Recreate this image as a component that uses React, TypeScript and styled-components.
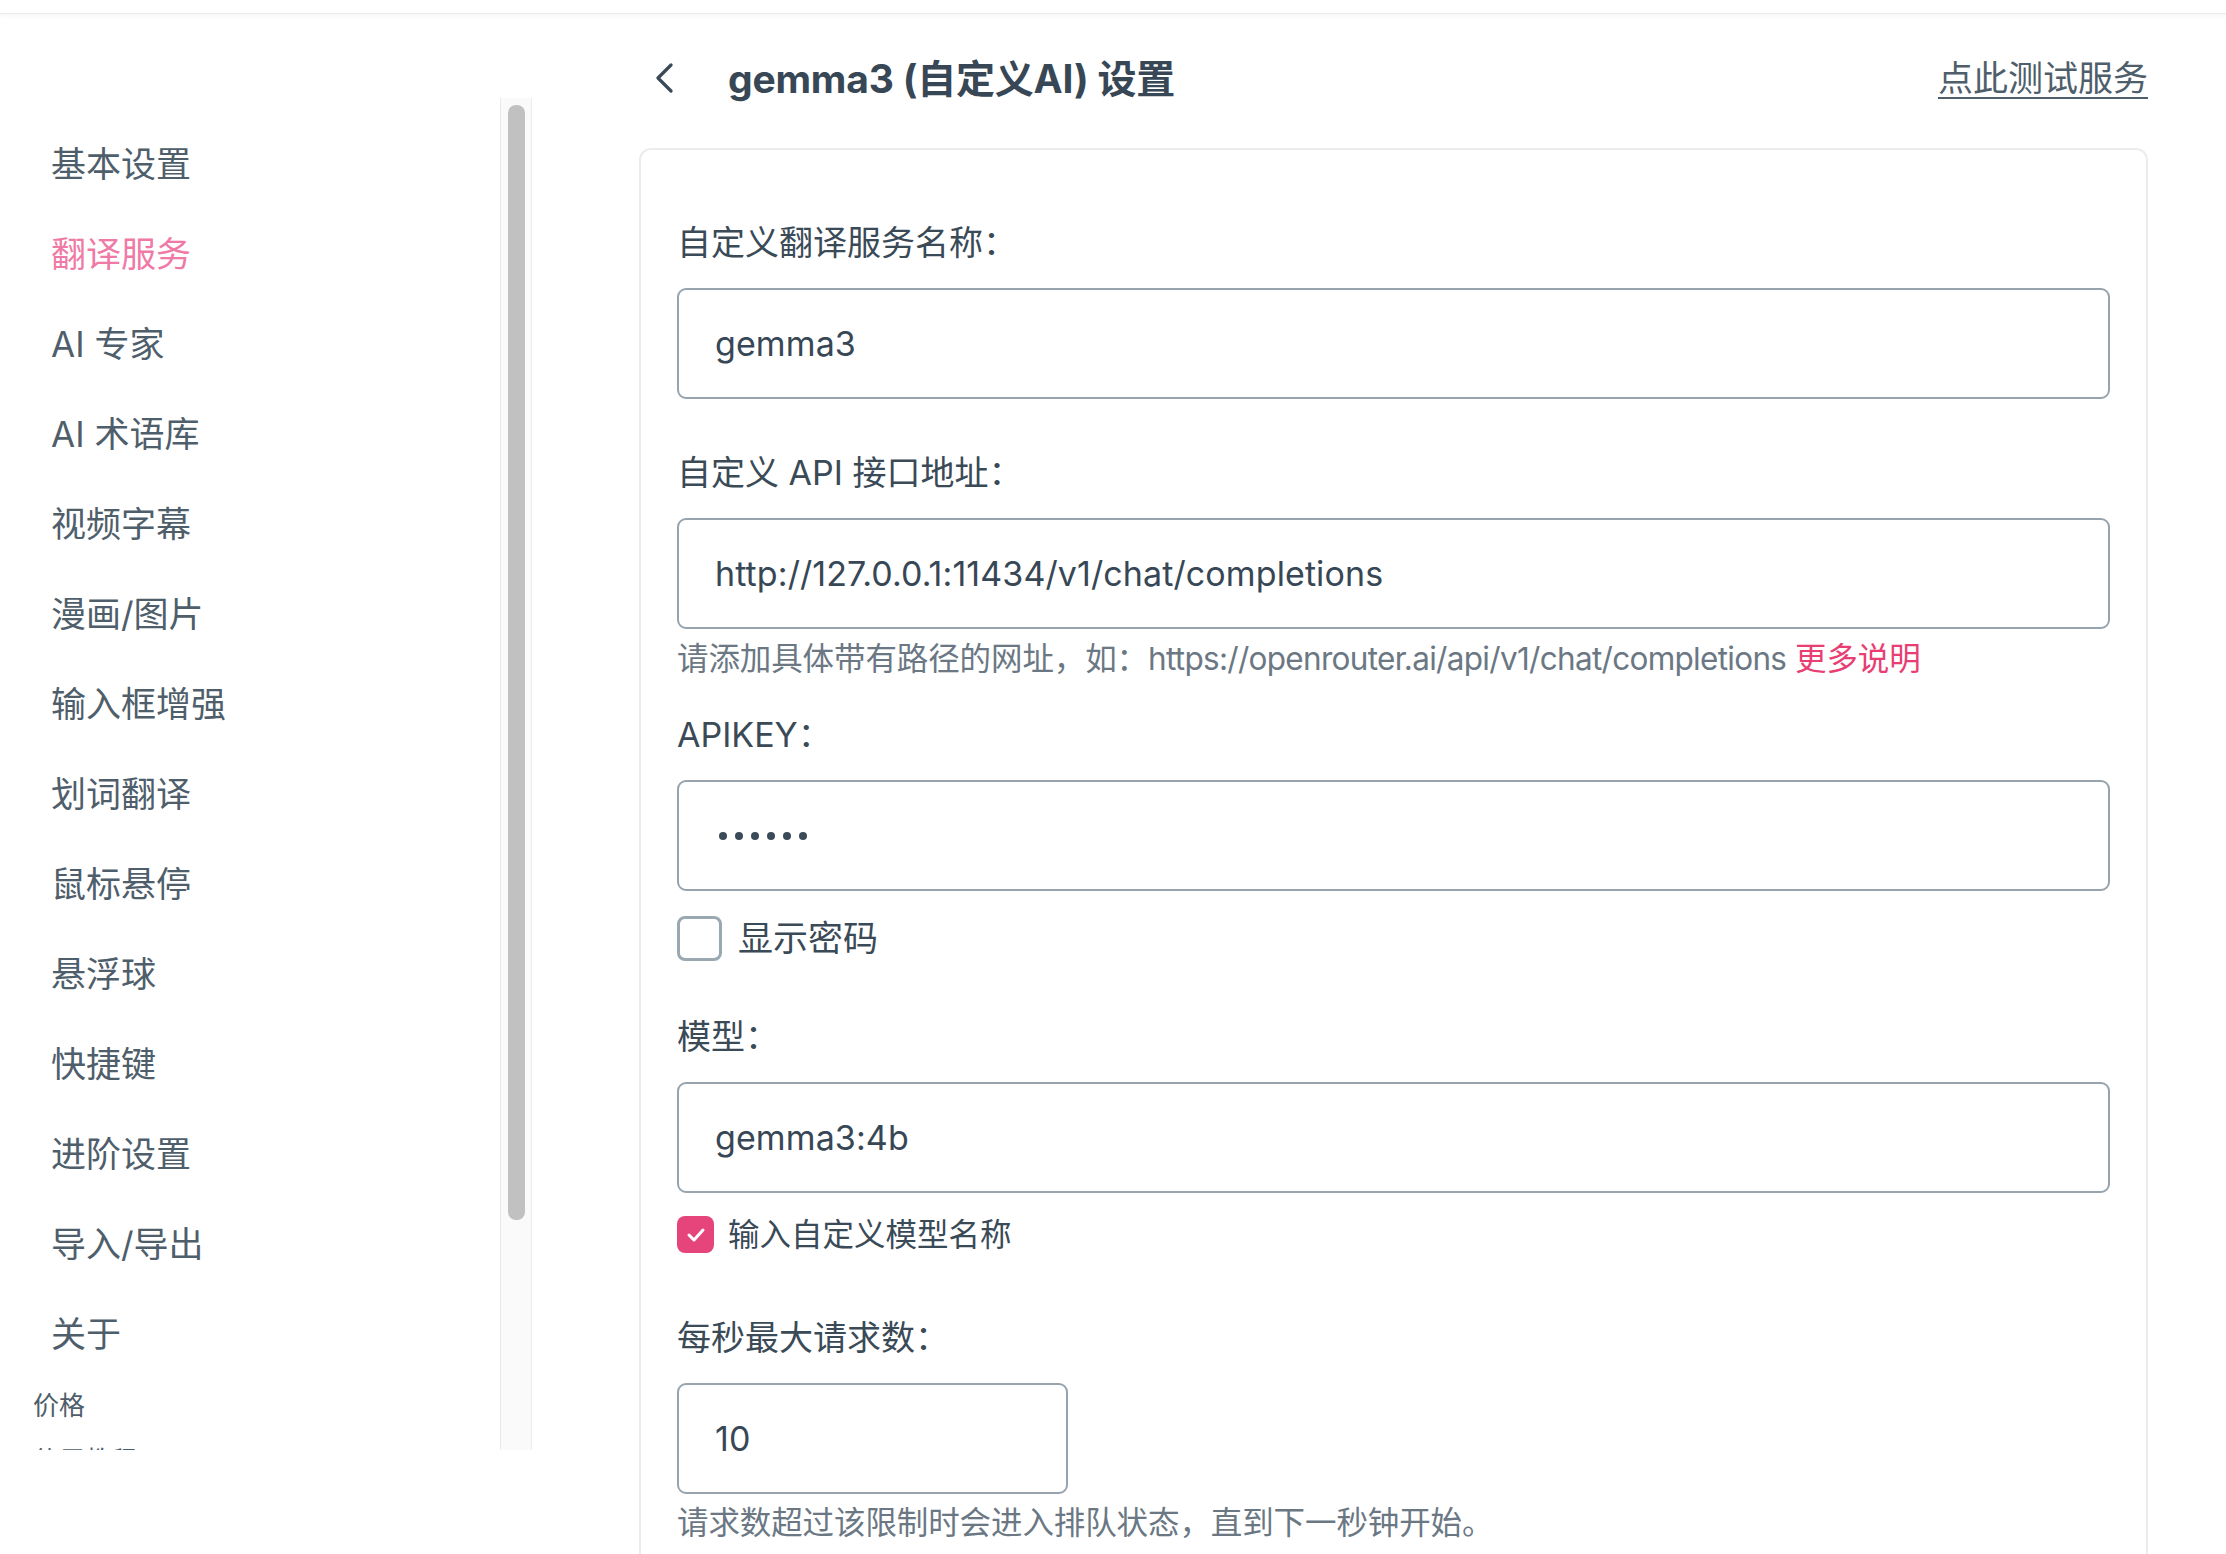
import React from 'react';
import styled, { createGlobalStyle } from 'styled-components';

const GlobalStyle = createGlobalStyle`
  html, body {
    margin: 0;
    padding: 0;
    background: #ffffff;
  }
  body {
    font-family: Inter, "Noto Sans CJK SC", sans-serif;
    color: #3a4a57;
  }
  * {
    box-sizing: border-box;
  }
`;

const TopBar = styled.div`
  height: 14px;
  border-bottom: 1px solid #ececec;
  box-shadow: 0 2px 4px rgba(0, 0, 0, 0.04);
`;

const Layout = styled.div`
  display: flex;
  align-items: flex-start;
  height: 1540px;
  overflow: hidden;
`;

const Sidebar = styled.aside`
  width: 532px;
  flex-shrink: 0;
  padding-top: 84px;
`;

const SidebarScroll = styled.div`
  display: flex;
  height: 1352px;
`;

const NavList = styled.nav`
  flex: 1;
  overflow: hidden;
  padding-top: 18px;
`;

const NavItem = styled.div<{ $active?: boolean }>`
  height: 90px;
  display: flex;
  align-items: center;
  padding-left: 51px;
  font-size: 35px;
  color: ${p => (p.$active ? '#f07aa6' : '#4f5e6b')};
`;

const SubLink = styled.div`
  height: 55px;
  display: flex;
  align-items: center;
  padding-left: 33px;
  font-size: 26px;
  color: #4f5e6b;
`;

const ScrollTrack = styled.div`
  width: 32px;
  flex-shrink: 0;
  background: #fafafa;
  border-left: 1px solid #e8e8e8;
  border-right: 1px solid #ececec;
  padding: 7px 6px 0 7px;
`;

const ScrollThumb = styled.div`
  height: 1115px;
  border-radius: 8px;
  background: #c1c1c1;
`;

const Main = styled.main`
  flex: 1;
  padding: 26px 78px 0 107px;
`;

const Header = styled.div`
  display: flex;
  align-items: center;
  height: 76px;
`;

const BackButton = styled.span`
  display: flex;
  align-items: center;
  margin-left: 16px;
  width: 73px;
`;

const Title = styled.h1`
  margin: 0;
  font-size: 39px;
  line-height: 1;
  font-weight: 700;
  color: #374755;
  letter-spacing: -0.2px;
`;

const TestLink = styled.a`
  margin-left: auto;
  font-size: 35px;
  line-height: 1;
  color: #4f5e6b;
  text-decoration: underline;
  text-underline-offset: 6px;
  text-decoration-thickness: 2px;
  cursor: pointer;
`;

const Card = styled.section`
  margin-top: 32px;
  border: 2px solid #ececec;
  border-bottom: none;
  border-radius: 12px 12px 0 0;
  padding: 68px 36px 40px 36px;
  min-height: 1400px;
`;

const Field = styled.div<{ $gap?: number }>`
  margin-top: ${p => p.$gap ?? 0}px;
`;

const Label = styled.div`
  height: 50px;
  display: flex;
  align-items: center;
  font-size: 34px;
  line-height: 1;
  color: #3a4a57;
`;

const TextInput = styled.input<{ $narrow?: boolean }>`
  display: block;
  margin-top: 20px;
  width: ${p => (p.$narrow ? '391px' : '100%')};
  height: 111px;
  padding: 0 36px;
  border: 2px solid #97a4ae;
  border-radius: 9px;
  font-family: Inter, "Noto Sans CJK SC", sans-serif;
  font-size: 34px;
  color: #374755;
  background: #fff;
  outline: none;
  letter-spacing: 0.1px;
`;

const PasswordDots = styled.div`
  margin-top: 20px;
  height: 111px;
  padding: 0 40px;
  border: 2px solid #97a4ae;
  border-radius: 9px;
  display: flex;
  align-items: center;
  gap: 8px;
`;

const Dot = styled.span`
  width: 8px;
  height: 8px;
  border-radius: 50%;
  background: #3a4a57;
`;

const Help = styled.div<{ $gap?: number }>`
  margin-top: ${p => p.$gap ?? 8}px;
  font-size: 31.5px;
  line-height: 44px;
  color: #6b7884;
  letter-spacing: -0.1px;
`;

const Url = styled.span`
  letter-spacing: -0.7px;
`;

const Accent = styled.span`
  color: #e83e74;
`;

const CheckRow = styled.label<{ $gap: number; $small?: boolean }>`
  display: flex;
  align-items: center;
  height: ${p => (p.$small ? 37 : 45)}px;
  gap: ${p => (p.$small ? 14 : 16)}px;
  margin-top: ${p => p.$gap}px;
  font-size: ${p => (p.$small ? 31.5 : 35)}px;
  line-height: 1;
  color: #3a4a57;
  cursor: pointer;
`;

const CheckBox = styled.span<{ $checked?: boolean; $size: number }>`
  width: ${p => p.$size}px;
  height: ${p => p.$size}px;
  border-radius: 8px;
  border: ${p => (p.$checked ? 'none' : '3px solid #9aa8b2')};
  background: ${p => (p.$checked ? '#e6457b' : '#fff')};
  display: flex;
  align-items: center;
  justify-content: center;
  flex-shrink: 0;
`;

const navItems = [
  '基本设置',
  '翻译服务',
  'AI 专家',
  'AI 术语库',
  '视频字幕',
  '漫画/图片',
  '输入框增强',
  '划词翻译',
  '鼠标悬停',
  '悬浮球',
  '快捷键',
  '进阶设置',
  '导入/导出',
  '关于',
];

const App: React.FC = () => {
  return (
    <>
      <GlobalStyle />
      <TopBar />
      <Layout>
        <Sidebar>
          <SidebarScroll>
            <NavList>
              {navItems.map(item => (
                <NavItem key={item} $active={item === '翻译服务'}>
                  {item}
                </NavItem>
              ))}
              <SubLink>价格</SubLink>
              <SubLink>使用教程</SubLink>
            </NavList>
            <ScrollTrack>
              <ScrollThumb />
            </ScrollTrack>
          </SidebarScroll>
        </Sidebar>

        <Main>
          <Header>
            <BackButton>
              <svg width="20" height="30" viewBox="0 0 20 30" fill="none">
                <polyline
                  points="16,2 3,15 16,28"
                  stroke="#3a4a57"
                  strokeWidth="3.2"
                  strokeLinecap="round"
                  strokeLinejoin="round"
                />
              </svg>
            </BackButton>
            <Title>gemma3 (自定义AI) 设置</Title>
            <TestLink>点此测试服务</TestLink>
          </Header>

          <Card>
            <Field>
              <Label>自定义翻译服务名称：</Label>
              <TextInput defaultValue="gemma3" />
            </Field>

            <Field $gap={49}>
              <Label>自定义 API 接口地址：</Label>
              <TextInput defaultValue="http://127.0.0.1:11434/v1/chat/completions" />
              <Help>
                请添加具体带有路径的网址，如：<Url>https://openrouter.ai/api/v1/chat/completions</Url>{' '}
                <Accent>更多说明</Accent>
              </Help>
            </Field>

            <Field $gap={29}>
              <Label>APIKEY：</Label>
              <PasswordDots>
                {[0, 1, 2, 3, 4, 5].map(i => (
                  <Dot key={i} />
                ))}
              </PasswordDots>
            </Field>

            <CheckRow $gap={25}>
              <CheckBox $size={45} />
              显示密码
            </CheckRow>

            <Field $gap={51}>
              <Label>模型：</Label>
              <TextInput defaultValue="gemma3:4b" />
            </Field>

            <CheckRow $gap={23} $small>
              <CheckBox $checked $size={37}>
                <svg width="20" height="16" viewBox="0 0 20 16" fill="none">
                  <polyline
                    points="3,8 8,13 17,3"
                    stroke="#fff"
                    strokeWidth="3"
                    strokeLinecap="round"
                    strokeLinejoin="round"
                  />
                </svg>
              </CheckBox>
              输入自定义模型名称
            </CheckRow>

            <Field $gap={60}>
              <Label>每秒最大请求数：</Label>
              <TextInput $narrow defaultValue="10" />
              <Help $gap={7}>请求数超过该限制时会进入排队状态，直到下一秒钟开始。</Help>
            </Field>
          </Card>
        </Main>
      </Layout>
    </>
  );
};

export default App;
